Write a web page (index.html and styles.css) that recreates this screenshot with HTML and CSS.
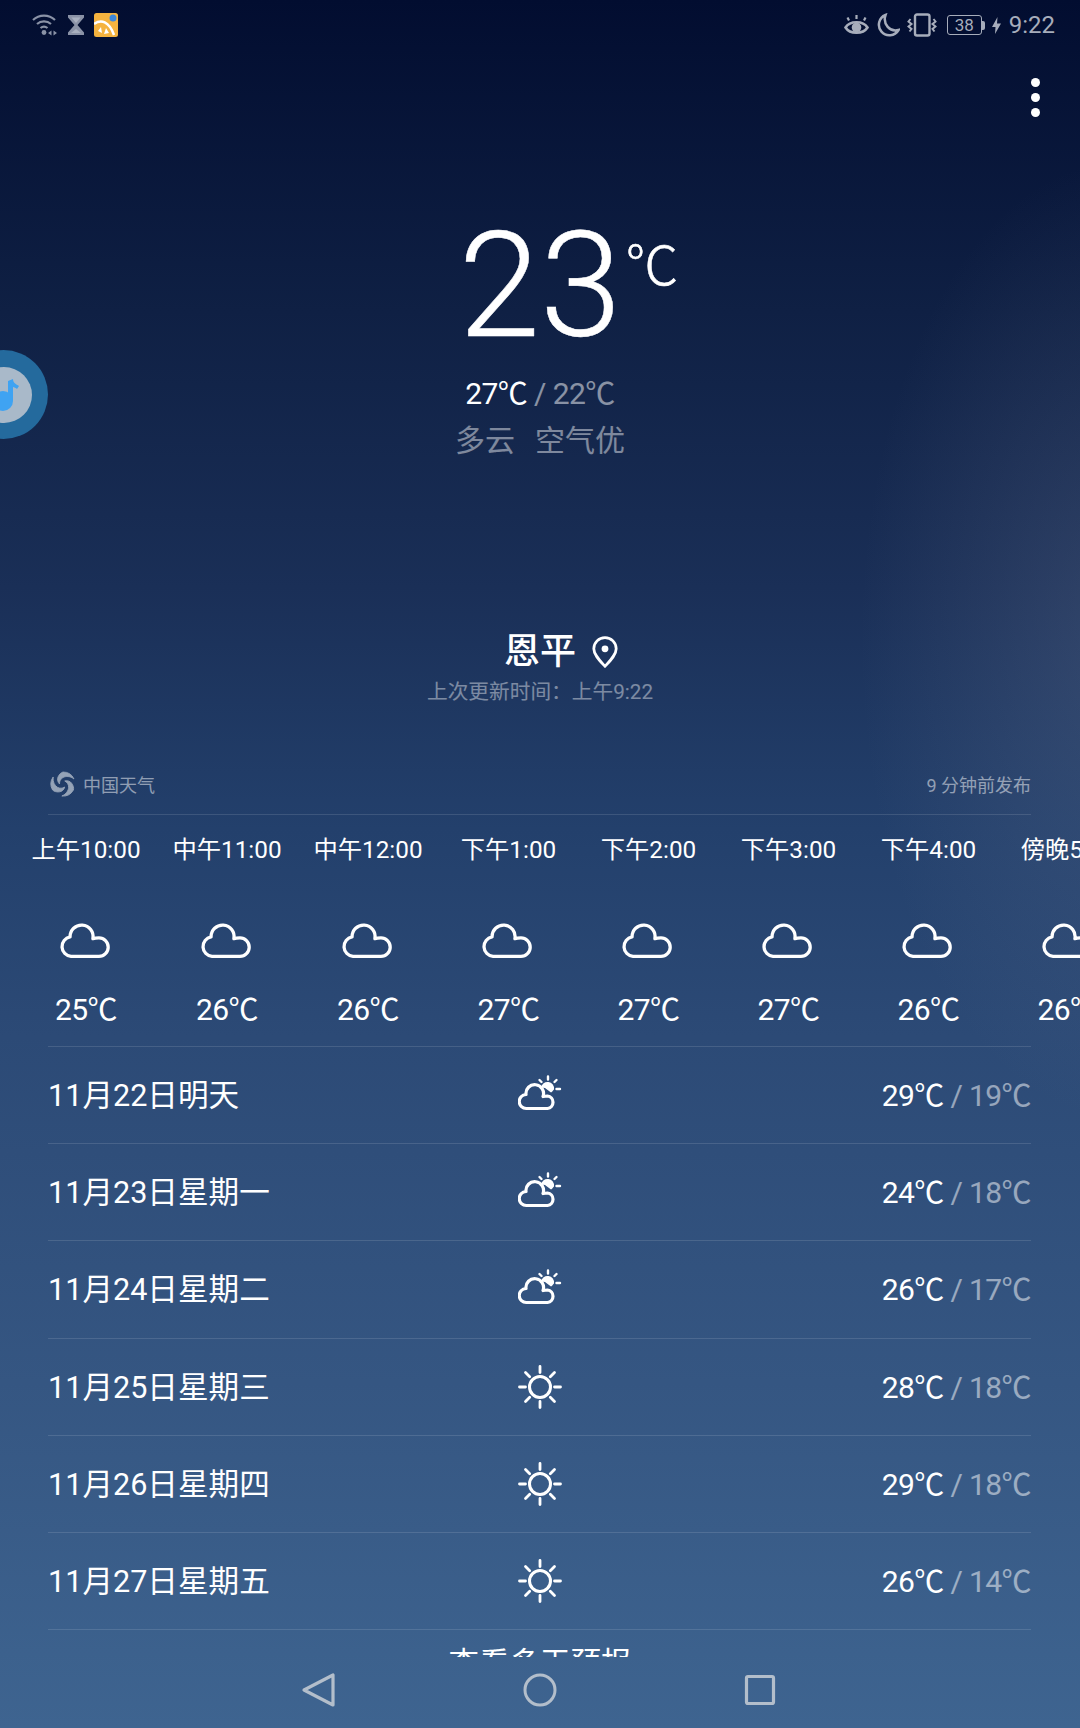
FILE: index.html
```html
<!DOCTYPE html>
<html lang="zh-CN">
<head>
    <meta charset="UTF-8">
    <meta name="viewport" content="width=device-width, initial-scale=1.0">
    <title>天气</title>
    <link rel="stylesheet" href="styles.css">
</head>
<body>
    <svg class="defs" width="0" height="0">
        <symbol id="cloud" viewBox="0 0 54 36">
            <path d="M12.500 34H41.500A9.600 9.600 0 0 0 41.500 14.800C39.500 14.800 37 15 35.200 15.600A11.950 11.950 0 1 0 11.500 13.800A10.200 10.200 0 0 0 12.500 34Z" fill="none" stroke="#fff" stroke-width="3.400" stroke-linejoin="round"/>
        </symbol>
        <symbol id="partly" viewBox="0 0 44 36">
            <path d="M23 12.500A6.500 6.500 0 0 1 36 14.500C35 15.500 34 17 33 17.500L27 13Z" fill="#fff"/>
            <path d="M30 1.500V4.500M21.500 5L23.500 7M38.500 5L36.500 7M38.500 14H42" stroke="#fff" stroke-width="2.400" stroke-linecap="round"/>
            <path d="M8.500 33.500H29.500A6.300 6.300 0 0 0 29.500 21C28 21 26.500 21 25 21.500A8.800 8.800 0 1 0 8 19.500A7 7 0 0 0 8.500 33.500Z" fill="none" stroke="#fff" stroke-width="3.200" stroke-linejoin="round"/>
        </symbol>
        <symbol id="sunny" viewBox="0 0 44 44">
            <circle cx="22" cy="22" r="10.500" fill="none" stroke="#fff" stroke-width="3"/>
            <path d="M22 1.500V7.500M22 36.500V42.500M1.500 22H7.500M36.500 22H42.500M7.500 7.500L11.700 11.700M32.300 32.300L36.500 36.500M36.500 7.500L32.300 11.700M11.700 32.300L7.500 36.500" stroke="#fff" stroke-width="2.800" stroke-linecap="round"/>
        </symbol>
    </svg>

    <div class="status-bar">
        <div class="status-left">
            <svg width="27" height="24" viewBox="0 0 27 24" class="dim">
                <path d="M3 7A16 16 0 0 1 25 7M7 11A10.500 10.500 0 0 1 21 11M10.500 15A5.500 5.500 0 0 1 17.500 15" fill="none" stroke="currentColor" stroke-width="2.200"/>
                <circle cx="14" cy="19.500" r="2.400" fill="currentColor"/>
                <path d="M18 20L21.500 17.500V22.500ZM27 20L23.500 17.500V22.500Z" fill="currentColor"/>
            </svg>
            <svg width="18" height="22" viewBox="0 0 18 22" class="dim">
                <path d="M1 1H17V3.500L10.500 11L17 18.500V21H1V18.500L7.500 11L1 3.500Z" fill="currentColor"/>
                <path d="M4.500 3.500H13.500L9 9ZM4 19L9 15L14 19Z" fill="#a9b0bf"/>
            </svg>
            <svg width="24" height="24" viewBox="0 0 24 24">
                <rect width="24" height="24" rx="2.500" fill="#f5b33f"/>
                <path d="M0 11C7 6 15 8 20 22" fill="none" stroke="#fff" stroke-width="2.500"/>
                <path d="M4 18L7 14L8 20ZM12 15L15 20L10 21Z" fill="#fff"/>
                <circle cx="19" cy="5" r="3.500" fill="#3d86d8"/>
            </svg>
        </div>
        <div class="status-right">
            <svg width="25" height="24" viewBox="0 0 25 24">
                <path d="M1.500 14.500C6 7.500 19 7.500 23.500 14.500C19 21.500 6 21.500 1.500 14.500Z" fill="none" stroke="currentColor" stroke-width="2.600"/>
                <circle cx="12.500" cy="14.500" r="4.800" fill="currentColor"/>
                <path d="M5 7.500L3.500 4.500M12.500 6V2M20 7.500L21.500 4.500" stroke="currentColor" stroke-width="2.200"/>
            </svg>
            <svg width="24" height="24" viewBox="0 0 24 24">
                <path d="M9.500 2A10.500 10.500 0 1 0 22.500 17C14 19.500 6.500 11 9.500 2Z" fill="none" stroke="currentColor" stroke-width="2.500"/>
            </svg>
            <svg width="30" height="24" viewBox="0 0 30 24">
                <rect x="8" y="1.500" width="14.500" height="21" rx="2" fill="none" stroke="currentColor" stroke-width="2.400"/>
                <path d="M3.500 6L1.500 8.500L4.500 11L1.500 13.500L4.500 16L2.500 18.500M26.500 6L28.500 8.500L25.500 11L28.500 13.500L25.500 16L27.500 18.500" fill="none" stroke="currentColor" stroke-width="2"/>
            </svg>
            <div class="battery"><span class="battery-level">38</span><i class="battery-tip"></i></div>
            <svg class="bolt" width="9" height="17" viewBox="0 0 9 17">
                <path d="M5.500 0L0 10H3.500L3 17L9 6.500H5Z" fill="currentColor"/>
            </svg>
            <span class="clock">9:22</span>
        </div>
    </div>

    <div class="main">
        <div class="menu">
            <i class="menu-dot"></i>
            <i class="menu-dot"></i>
            <i class="menu-dot"></i>
        </div>

        <div class="now">
            <div class="now-temp">23<span class="now-unit">℃</span></div>
            <div class="now-range">27℃<span class="muted"> / 22℃</span></div>
            <div class="now-desc"><span>多云</span><span>空气优</span></div>
            <div class="city">
                <span class="city-name">恩平</span>
                <svg class="city-pin" width="26" height="32" viewBox="0 0 24 30">
                    <path d="M12 28.500C7 23 1.500 17.500 1.500 12A10.500 10.500 0 0 1 22.500 12C22.500 17.500 17 23 12 28.500Z" fill="none" stroke="#fff" stroke-width="2.600" stroke-linejoin="round"/>
                    <circle cx="12" cy="12" r="3.200" fill="#fff"/>
                </svg>
            </div>
            <div class="updated">上次更新时间：上午9:22</div>
        </div>

        <div class="source">
            <div class="source-brand">
                <svg width="26" height="26" viewBox="0 0 26 26">
                    <g fill="#95a3b7" stroke="#95a3b7" stroke-width="0.800">
                        <path id="blade" d="M13 1A12 12 0 0 1 24 8C20 5 16 5 13 6.500C10.500 8 9.500 10 9.500 13C7.500 11 7 8 8 6C9 3.500 11 1.500 13 1Z"/>
                        <use href="#blade" transform="rotate(120 13 13)"/>
                        <use href="#blade" transform="rotate(240 13 13)"/>
                    </g>
                </svg>
                <span>中国天气</span>
            </div>
            <span>9 分钟前发布</span>
        </div>

        <div class="hours">
            <div class="hour wide"><span>上午10:00</span><svg width="52" height="36"><use href="#cloud"/></svg><span class="hour-temp">25℃</span></div>
            <div class="hour wide"><span>中午11:00</span><svg width="52" height="36"><use href="#cloud"/></svg><span class="hour-temp">26℃</span></div>
            <div class="hour wide"><span>中午12:00</span><svg width="52" height="36"><use href="#cloud"/></svg><span class="hour-temp">26℃</span></div>
            <div class="hour"><span>下午1:00</span><svg width="52" height="36"><use href="#cloud"/></svg><span class="hour-temp">27℃</span></div>
            <div class="hour"><span>下午2:00</span><svg width="52" height="36"><use href="#cloud"/></svg><span class="hour-temp">27℃</span></div>
            <div class="hour"><span>下午3:00</span><svg width="52" height="36"><use href="#cloud"/></svg><span class="hour-temp">27℃</span></div>
            <div class="hour"><span>下午4:00</span><svg width="52" height="36"><use href="#cloud"/></svg><span class="hour-temp">26℃</span></div>
            <div class="hour"><span>傍晚5:00</span><svg width="52" height="36"><use href="#cloud"/></svg><span class="hour-temp">26℃</span></div>
        </div>

        <div class="days">
            <div class="day">
                <span>11月22日明天</span>
                <svg class="day-icon" width="44" height="36"><use href="#partly"/></svg>
                <span class="day-temp">29℃<span class="muted"> / 19℃</span></span>
            </div>
            <div class="day">
                <span>11月23日星期一</span>
                <svg class="day-icon" width="44" height="36"><use href="#partly"/></svg>
                <span class="day-temp">24℃<span class="muted"> / 18℃</span></span>
            </div>
            <div class="day">
                <span>11月24日星期二</span>
                <svg class="day-icon" width="44" height="36"><use href="#partly"/></svg>
                <span class="day-temp">26℃<span class="muted"> / 17℃</span></span>
            </div>
            <div class="day">
                <span>11月25日星期三</span>
                <svg width="44" height="44"><use href="#sunny"/></svg>
                <span class="day-temp">28℃<span class="muted"> / 18℃</span></span>
            </div>
            <div class="day">
                <span>11月26日星期四</span>
                <svg width="44" height="44"><use href="#sunny"/></svg>
                <span class="day-temp">29℃<span class="muted"> / 18℃</span></span>
            </div>
            <div class="day">
                <span>11月27日星期五</span>
                <svg width="44" height="44"><use href="#sunny"/></svg>
                <span class="day-temp">26℃<span class="muted"> / 14℃</span></span>
            </div>
        </div>

        <div class="more">查看多天预报</div>
    </div>

    <div class="nav-bar">
        <svg width="40" height="40" viewBox="0 0 40 40">
            <path d="M4 20L33 5V35Z" fill="none" stroke="currentColor" stroke-width="3.200" stroke-linejoin="round"/>
        </svg>
        <svg width="40" height="40" viewBox="0 0 40 40">
            <circle cx="20" cy="20" r="15" fill="none" stroke="currentColor" stroke-width="3"/>
        </svg>
        <svg width="40" height="40" viewBox="0 0 40 40">
            <rect x="6.500" y="6.500" width="27" height="27" rx="1.500" fill="none" stroke="currentColor" stroke-width="3.200"/>
        </svg>
    </div>

    <div class="float-btn">
        <div class="float-inner">
            <svg width="32" height="40" viewBox="0 0 32 40">
                <circle cx="15" cy="26" r="10" fill="#3fa3f2"/>
                <path d="M20 6L25 4C25 8 28 9 31 11L29 14C28 13 26 12 25 12V26H20Z" fill="#3fa3f2"/>
            </svg>
        </div>
    </div>
</body>
</html>
```

FILE: styles.css
```css
* {
    margin: 0;
    padding: 0;
    box-sizing: border-box;
}

body {
    width: 1080px;
    height: 1728px;
    overflow: hidden;
    position: relative;
    font-family: Roboto, "Noto Sans CJK SC", sans-serif;
    color: #fff;
    background:
        radial-gradient(ellipse 260px 480px at 1120px 640px, rgba(110, 122, 150, 0.28), rgba(110, 122, 150, 0) 100%),
        linear-gradient(180deg, #020d30 0%, #0f2044 18%, #1a2f57 34%, #23406c 48%, #2c4a76 60%, #355682 80%, #3e6490 100%);
}

.defs {
    position: absolute;
}

svg {
    display: block;
}

.muted {
    opacity: 0.5;
}

/* status bar */
.status-bar {
    height: 50px;
    display: flex;
    justify-content: space-between;
    align-items: center;
    padding: 0 25px 0 30px;
    color: #a7adbb;
}

.status-left,
.status-right {
    display: flex;
    align-items: center;
}

.status-left {
    gap: 9.500px;
}

.status-right {
    gap: 7px;
}

.dim {
    color: #8a92a6;
}

.battery {
    display: flex;
    align-items: center;
    margin-left: 3px;
}

.battery-level {
    width: 35px;
    height: 20px;
    border: 1px solid currentColor;
    border-radius: 3px;
    font-size: 17px;
    line-height: 18px;
    text-align: center;
}

.battery-tip {
    width: 3px;
    height: 9px;
    background: currentColor;
    border-radius: 0 2px 2px 0;
}

.clock {
    font-size: 24px;
    line-height: 28px;
    margin-left: 1px;
}

/* scrolling page */
.main {
    height: 1607px;
    overflow: hidden;
}

.menu {
    display: flex;
    flex-direction: column;
    align-items: flex-end;
    gap: 6px;
    padding: 28px 40px 0 0;
}

.menu-dot {
    width: 9px;
    height: 9px;
    border-radius: 50%;
    background: #fff;
}

.now {
    display: flex;
    flex-direction: column;
    align-items: center;
    margin-top: 94px;
}

.now-temp {
    position: relative;
    font-size: 147px;
    font-weight: 300;
    line-height: 150px;
    -webkit-text-stroke: 0.5px #fff;
}

.now-unit {
    position: absolute;
    left: 100%;
    margin-left: 4px;
    top: 26px;
    font-size: 53px;
    font-weight: 300;
    line-height: 60px;
}

.now-range {
    margin-top: 13px;
    font-size: 30px;
    line-height: 40px;
    letter-spacing: -0.600px;
}

.now-desc {
    display: flex;
    gap: 20px;
    margin-top: 7px;
    font-size: 30px;
    line-height: 40px;
    opacity: 0.45;
}

.city {
    display: flex;
    align-items: center;
    gap: 16px;
    margin-top: 171px;
    padding-left: 42px;
}

.city-name {
    font-size: 36px;
    font-weight: 500;
    line-height: 40px;
}

.updated {
    margin-top: 5px;
    font-size: 20.700px;
    line-height: 30px;
    opacity: 0.42;
}

.source {
    display: flex;
    justify-content: space-between;
    align-items: center;
    height: 60px;
    margin: 48px 49px 0 48px;
    padding-bottom: 2px;
    border-bottom: 1px solid rgba(255, 255, 255, 0.12);
    font-size: 18px;
    color: rgba(255, 255, 255, 0.5);
}

.source-brand {
    display: flex;
    align-items: center;
    gap: 7px;
    margin-left: 2px;
}

.hours {
    display: flex;
    padding: 18px 0 0 15.500px;
    height: 231px;
    overflow: hidden;
}

.hour {
    flex: none;
    width: 140px;
    display: flex;
    flex-direction: column;
    align-items: center;
    font-size: 24.300px;
    line-height: 34px;
    white-space: nowrap;
}

.hour.wide {
    width: 141px;
}

.hour svg {
    margin: 56px 3px 0 0;
}

.hour-temp {
    margin-top: 31px;
    font-size: 30px;
    line-height: 40px;
    letter-spacing: -0.600px;
}

.days {
    margin: 0 49px 0 48px;
    border-top: 1px solid rgba(255, 255, 255, 0.12);
}

.day {
    display: grid;
    grid-template-columns: 1fr auto 1fr;
    align-items: center;
    height: 97.200px;
    border-bottom: 1px solid rgba(255, 255, 255, 0.12);
    font-size: 30.600px;
}

.day > span {
    padding-bottom: 4px;
}

.day-icon {
    margin-bottom: 4px;
}

.day-temp {
    text-align: right;
    font-size: 30px;
    letter-spacing: -0.600px;
}

.more {
    padding-top: 14px;
    font-size: 30.500px;
    line-height: 40px;
    text-align: center;
}

/* system nav */
.nav-bar {
    height: 71px;
    padding-bottom: 5px;
    display: flex;
    justify-content: center;
    align-items: center;
    gap: 180px;
    color: #b3becb;
}

.float-btn {
    position: absolute;
    left: -41px;
    top: 350px;
    width: 89px;
    height: 89px;
    border-radius: 50%;
    background: #246a9d;
    display: flex;
    align-items: center;
    justify-content: center;
}

.float-inner {
    width: 56px;
    height: 56px;
    border-radius: 50%;
    background: #a9b9c9;
    display: flex;
    align-items: center;
    justify-content: center;
}
```
